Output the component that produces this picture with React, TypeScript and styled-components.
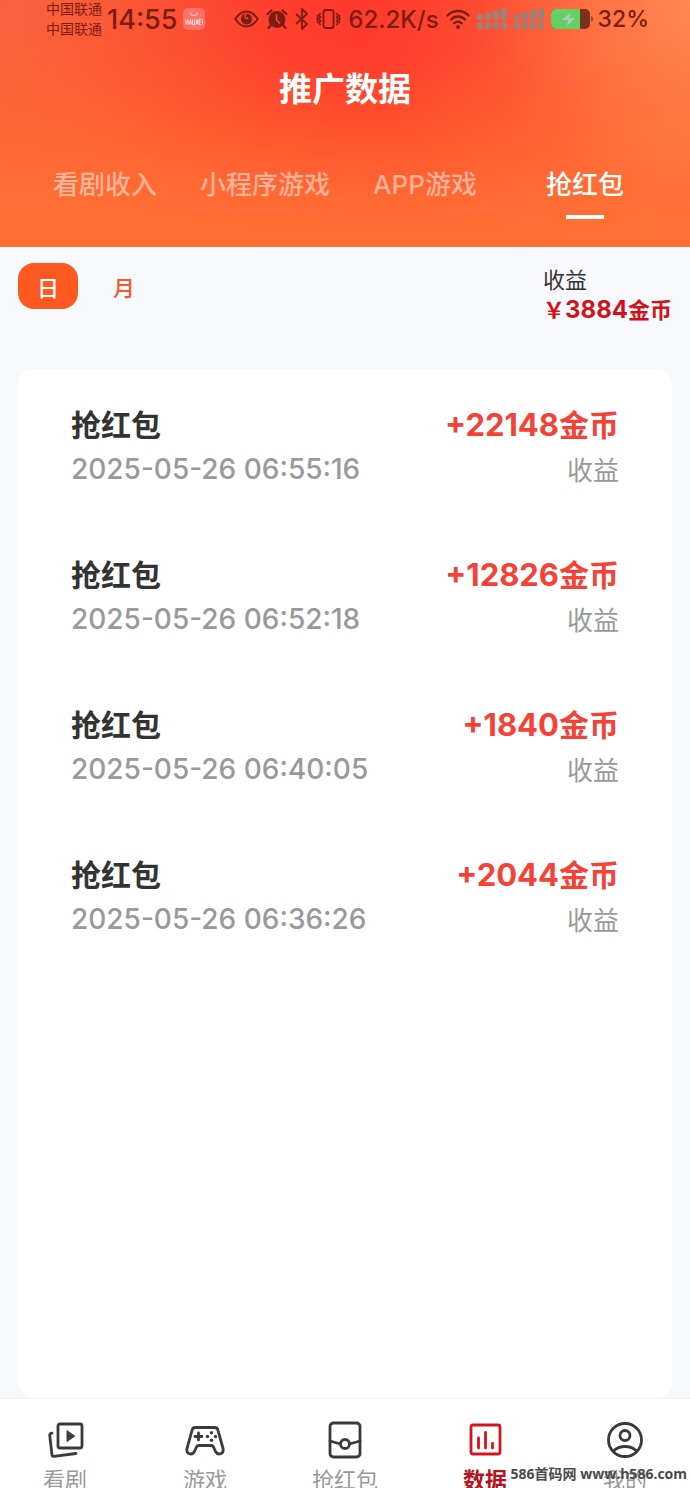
import React, { useState } from "react";
import styled, { createGlobalStyle } from "styled-components";

const GlobalStyle = createGlobalStyle`
  * { box-sizing: border-box; }
  body {
    margin: 0;
    background: #f8f9fd;
    font-family: Inter, "Noto Sans CJK SC", sans-serif;
    color: #333333;
  }
  button { font: inherit; border: 0; padding: 0; background: none; cursor: pointer; }
  a { color: inherit; text-decoration: none; }
`;

const Page = styled.div`
  position: relative;
  display: flex;
  flex-direction: column;
  height: 100vh;
  overflow: hidden;
`;

const Header = styled.header`
  flex: none;
  background:
    radial-gradient(ellipse 50% 120% at 102% 0%, rgba(255, 140, 86, 0.95) 0%, rgba(255, 134, 78, 0.65) 32%, rgba(255, 124, 64, 0.22) 66%, rgba(255, 112, 50, 0) 100%),
    radial-gradient(ellipse 42% 80% at 0% 0%, rgba(244, 98, 64, 0.8) 0%, rgba(246, 96, 62, 0.35) 50%, rgba(246, 96, 62, 0) 100%),
    radial-gradient(ellipse 76% 104% at 56% 0%, #ff382c 0%, rgba(255, 60, 44, 0.96) 24%, rgba(255, 72, 42, 0.7) 52%, rgba(255, 94, 46, 0.3) 78%, rgba(255, 112, 50, 0) 100%),
    linear-gradient(#ff6638, #ff7033);
`;

const StatusBar = styled.div`
  display: flex;
  align-items: center;
  justify-content: space-between;
  height: 38px;
  padding: 0 41px 0 46px;
  color: #7c1c12;
  font-weight: 500;
  white-space: nowrap;
`;

const StatusGroup = styled.div<{ $gap: number }>`
  display: flex;
  align-items: center;
  gap: ${(p) => p.$gap}px;
`;

const Carriers = styled.div`
  font-size: 14px;
  line-height: 20px;
  font-weight: 400;
`;

const Clock = styled.time`
  font-size: 27px;
`;

const Reading = styled.span<{ $size: number }>`
  font-size: ${(p) => p.$size}px;
`;

const Title = styled.h1`
  margin: 0;
  padding-top: 26px;
  text-align: center;
  color: #ffffff;
  font-size: 33px;
  line-height: 50px;
  font-weight: 700;
`;

const Tabs = styled.nav`
  display: flex;
  padding: 50px 25px 28px;
`;

const Tab = styled.button<{ $active: boolean }>`
  flex: 1;
  display: flex;
  flex-direction: column;
  align-items: center;
  gap: 9px;
  color: ${(p) => (p.$active ? "#ffffff" : "rgba(255, 255, 255, 0.5)")};
  font-size: 26px;
  line-height: 42px;
  font-weight: 500;
  white-space: nowrap;

  &::after {
    content: "";
    width: 38px;
    height: 4px;
    background: ${(p) => (p.$active ? "#ffffff" : "transparent")};
  }
`;

const Filter = styled.section`
  flex: none;
  display: flex;
  justify-content: space-between;
  align-items: flex-start;
  height: 122px;
  padding: 16px 18px 0;
`;

const Periods = styled.div`
  display: flex;
  gap: 16px;
`;

const Period = styled.button<{ $active: boolean }>`
  width: 60px;
  height: 46px;
  border-radius: 16px;
  background: ${(p) => (p.$active ? "#ff5820" : "transparent")};
  color: ${(p) => (p.$active ? "#ffffff" : "#f25a2c")};
  font-size: 22px;
  font-weight: 500;
`;

const Total = styled.div`
  padding-top: 2px;
  font-size: 22px;
  line-height: 30px;
`;

const TotalValue = styled.div`
  color: #d0121b;
  font-weight: 700;
`;

const TotalNumber = styled.span`
  font-size: 24px;
`;

const Card = styled.main`
  flex: 1;
  min-height: 0;
  margin: 0 18px;
  padding: 33px 53px;
  border-radius: 16px;
  background: #ffffff;
`;

const Records = styled.ul`
  display: flex;
  flex-direction: column;
  gap: 58px;
  margin: 0;
  padding: 0;
  list-style: none;
`;

const Record = styled.li`
  display: flex;
  flex-direction: column;
`;

const Line = styled.div`
  display: flex;
  justify-content: space-between;
  align-items: center;
  height: 46px;
  line-height: 46px;
  white-space: nowrap;
`;

const Name = styled.span`
  font-size: 30px;
  font-weight: 700;
`;

const Amount = styled.span`
  color: #f44336;
  font-size: 30px;
  font-weight: 700;
`;

const AmountNumber = styled.span`
  font-size: 31px;
`;

const Time = styled.time`
  padding-bottom: 4px;
  color: #999999;
  font-size: 28px;
  font-weight: 500;
`;

const Caption = styled.span`
  color: #999999;
  font-size: 26px;
`;

const BottomNav = styled.nav`
  flex: none;
  display: flex;
  justify-content: space-between;
  height: 90px;
  padding: 21px 25px 0;
  border-top: 1px solid #f3f5f5;
  background: #ffffff;
  overflow: hidden;
`;

const NavItem = styled.a<{ $active?: boolean }>`
  display: flex;
  flex-direction: column;
  align-items: center;
  width: 80px;
  color: ${(p) => (p.$active ? "#b5121b" : "#999999")};
  font-size: 22px;
  line-height: 40px;
  font-weight: ${(p) => (p.$active ? 700 : 400)};
  white-space: nowrap;

  svg {
    flex: none;
    color: ${(p) => (p.$active ? "#d4141c" : "#3a3a3a")};
  }
`;

const Watermark = styled.div`
  position: absolute;
  right: 3px;
  bottom: 4px;
  color: #4a4a4a;
  font-family: "Open Sans", "Noto Sans CJK SC", sans-serif;
  font-size: 14px;
  line-height: 20px;
  font-weight: 700;
`;

const StoreIcon = () => (
  <svg width="22" height="22" viewBox="0 0 22 22" aria-hidden="true">
    <rect width="22" height="22" rx="5" fill="#ff7069" />
    <path d="M7.500 4.500a3.500 3 0 0 0 7 0" fill="none" stroke="#ffc4bd" strokeWidth="1.200" />
    <path d="M3 15v4M5 15v4" stroke="none" />
    <path d="M3 11.500v5M5 11.500v5M3 14h2M6.500 16.500l1-5 1 5M9.500 11.500v5h2v-5M13 16.500l1-5 1 5M18 11.500h-2v5h2M16 14h2M19.500 11.500v5" fill="none" stroke="#ffe3df" strokeWidth="1" />
  </svg>
);

const EyeIcon = () => (
  <svg width="25" height="18" viewBox="0 0 25 18" aria-hidden="true">
    <path d="M1.200 9C5 3.500 8.500 1.500 12.500 1.500S20 3.500 23.800 9C20 14.500 16.500 16.500 12.500 16.500S5 14.500 1.200 9z" fill="none" stroke="currentColor" strokeWidth="2" />
    <circle cx="12.500" cy="9" r="5.500" fill="currentColor" />
    <path d="M12.500 3.500a3 3 0 0 0-1 4.500c1 1 2 .8 2.500-.5" fill="none" stroke="#ff4a33" strokeWidth="1.300" />
  </svg>
);

const AlarmIcon = () => (
  <svg width="22" height="20" viewBox="0 0 22 20" aria-hidden="true">
    <circle cx="11" cy="10.500" r="8.500" fill="currentColor" />
    <path d="M1.500 5l4-3.500M20.500 5l-4-3.500M5 16l-2.500 3M17 16l2.500 3" stroke="currentColor" strokeWidth="2.200" strokeLinecap="round" />
    <path d="M10.500 6v5l3 3" fill="none" stroke="#ff4a33" strokeWidth="1.500" strokeLinecap="round" />
  </svg>
);

const BluetoothIcon = () => (
  <svg width="14" height="22" viewBox="0 0 14 22" aria-hidden="true">
    <path d="M1 6l11 10-5 5V1l5 5L1 16" fill="none" stroke="currentColor" strokeWidth="1.800" strokeLinejoin="round" />
  </svg>
);

const VibrateIcon = () => (
  <svg width="25" height="20" viewBox="0 0 25 20" aria-hidden="true">
    <rect x="7.500" y="1" width="10" height="18" rx="2" fill="none" stroke="currentColor" strokeWidth="1.800" />
    <path d="M4.500 4L3 6l1.500 2L3 10l1.500 2L3 14l1.500 2M1 6l1 2-1 2 1 2-1 2M20.500 4L22 6l-1.500 2 1.500 2-1.500 2 1.500 2-1.500 2M24 6l-1 2 1 2-1 2 1 2" fill="none" stroke="currentColor" strokeWidth="1.500" />
  </svg>
);

const WifiIcon = () => (
  <svg width="24" height="20" viewBox="0 0 24 20" aria-hidden="true">
    <path d="M1.500 6.500c6-6 15-6 21 0M5 10.500c4-4 10-4 14 0M8.200 14.200c2.200-2.200 5.400-2.200 7.600 0" fill="none" stroke="currentColor" strokeWidth="2.300" strokeLinecap="round" />
    <circle cx="12" cy="18" r="2" fill="currentColor" />
  </svg>
);

const SignalIcon = () => (
  <svg width="30" height="22" viewBox="0 0 30 22" fill="#9d8078" aria-hidden="true">
    {[0, 1, 2, 3].map((i) => (
      <g key={i}>
        <rect x={i * 8} y={6 - i * 2} width="6" height={6 + i * 2} rx="2" />
        <rect x={i * 8} y="14" width="6" height="7" rx="2" />
      </g>
    ))}
  </svg>
);

const BatteryIcon = () => (
  <svg width="43" height="20" viewBox="0 0 43 20" aria-hidden="true">
    <rect width="39" height="20" rx="5" fill="#7c3020" />
    <path d="M5 0h24v20H5a5 5 0 0 1-5-5V5a5 5 0 0 1 5-5z" fill="#62d065" />
    <path d="M40 7c3 1 3 5 0 6z" fill="#a64a30" />
    <path d="M20 3l-9 8h6l-1 6 8-8h-6z" fill="#b5c9b6" />
  </svg>
);

const iconProps = {
  width: 40,
  height: 40,
  viewBox: "0 0 40 40",
  fill: "none",
  stroke: "currentColor",
  strokeWidth: 2.8,
  strokeLinecap: "round",
  strokeLinejoin: "round",
  "aria-hidden": true,
} as const;

const VideoIcon = () => (
  <svg {...iconProps}>
    <rect x="13" y="4" width="24" height="24" rx="2" />
    <path d="M22 11v10.500l7.500-5.200z" fill="currentColor" strokeWidth="1" />
    <path d="M7 13.200q-2.500 0-2.300 2L7 35q.2 1.500 2 1.300L31 33.500" />
  </svg>
);

const GameIcon = () => (
  <svg {...iconProps}>
    <path d="M10.500 7.500h19a3.500 3.500 0 0 1 3.500 2.800l5 18c1.200 6-5 7.500-7.500 3.200l-2-4.500c-.6-1.200-1.300-1.500-2.500-1.500H14c-1.200 0-2 .4-2.500 1.500l-2 4.500C7 35.800.8 34.300 2 28.300l5-18a3.500 3.500 0 0 1 3.500-2.800z" />
    <path d="M13.500 13v7M10 16.500h7" />
    <g fill="currentColor" stroke="none">
      <circle cx="26.500" cy="12.700" r="1.700" />
      <circle cx="26.500" cy="20.300" r="1.700" />
      <circle cx="22.500" cy="16.500" r="1.700" />
      <circle cx="30.500" cy="16.500" r="1.700" />
    </g>
  </svg>
);

const PacketIcon = () => (
  <svg {...iconProps}>
    <rect x="5" y="3" width="30" height="34" rx="3.500" />
    <path d="M5 21l10.500 3M35 21l-10.500 3" />
    <circle cx="20" cy="24" r="4.500" />
  </svg>
);

const ChartIcon = () => (
  <svg {...iconProps}>
    <rect x="6" y="5" width="29" height="29" rx="2" />
    <path d="M13.500 18v10M20.500 12.500V28M27.500 23.500V28" />
  </svg>
);

const UserIcon = () => (
  <svg {...iconProps}>
    <circle cx="20" cy="20" r="16.500" />
    <circle cx="20" cy="15.500" r="5" />
    <path d="M8.500 31c6-6 17-6 23 0" />
  </svg>
);

const tabs = ["看剧收入", "小程序游戏", "APP游戏", "抢红包"];
const periods = ["日", "月"];
const records = [
  { time: "2025-05-26 06:55:16", amount: 22148 },
  { time: "2025-05-26 06:52:18", amount: 12826 },
  { time: "2025-05-26 06:40:05", amount: 1840 },
  { time: "2025-05-26 06:36:26", amount: 2044 },
];
const navItems = [
  { label: "看剧", Icon: VideoIcon },
  { label: "游戏", Icon: GameIcon },
  { label: "抢红包", Icon: PacketIcon },
  { label: "数据", Icon: ChartIcon, active: true },
  { label: "我的", Icon: UserIcon },
];

export default function App() {
  const [tab, setTab] = useState(3);
  const [period, setPeriod] = useState(0);

  return (
    <Page>
      <GlobalStyle />
      <Header>
        <StatusBar>
          <StatusGroup $gap={5}>
            <Carriers>
              <div>中国联通</div>
              <div>中国联通</div>
            </Carriers>
            <Clock>14:55</Clock>
            <StoreIcon />
          </StatusGroup>
          <StatusGroup $gap={7}>
            <EyeIcon />
            <AlarmIcon />
            <BluetoothIcon />
            <VibrateIcon />
            <Reading $size={24}>62.2K/s</Reading>
            <WifiIcon />
            <SignalIcon />
            <SignalIcon />
            <StatusGroup $gap={4}>
              <BatteryIcon />
              <Reading $size={23}>32%</Reading>
            </StatusGroup>
          </StatusGroup>
        </StatusBar>
        <Title>推广数据</Title>
        <Tabs>
          {tabs.map((label, i) => (
            <Tab key={label} $active={i === tab} onClick={() => setTab(i)}>
              {label}
            </Tab>
          ))}
        </Tabs>
      </Header>

      <Filter>
        <Periods>
          {periods.map((label, i) => (
            <Period key={label} $active={i === period} onClick={() => setPeriod(i)}>
              {label}
            </Period>
          ))}
        </Periods>
        <Total>
          <div>收益</div>
          <TotalValue>
            ￥<TotalNumber>3884</TotalNumber>金币
          </TotalValue>
        </Total>
      </Filter>

      <Card>
        <Records>
          {records.map((r) => (
            <Record key={r.time}>
              <Line>
                <Name>抢红包</Name>
                <Amount>
                  <AmountNumber>+{r.amount}</AmountNumber>金币
                </Amount>
              </Line>
              <Line>
                <Time>{r.time}</Time>
                <Caption>收益</Caption>
              </Line>
            </Record>
          ))}
        </Records>
      </Card>

      <BottomNav>
        {navItems.map(({ label, Icon, active }) => (
          <NavItem key={label} href="#" $active={active}>
            <Icon />
            {label}
          </NavItem>
        ))}
      </BottomNav>
      <Watermark>586首码网 www.h586.com</Watermark>
    </Page>
  );
}
